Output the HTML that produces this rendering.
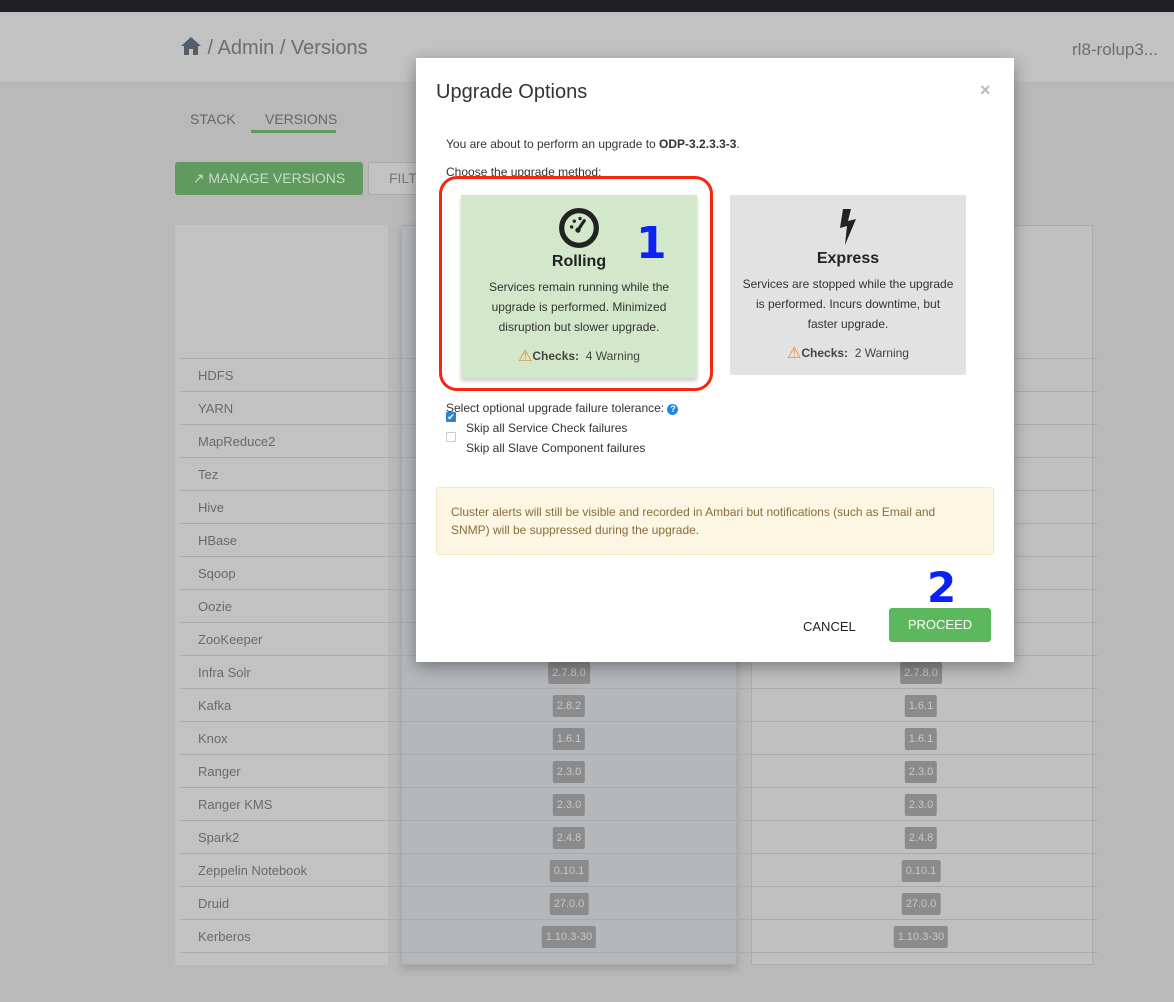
<!DOCTYPE html>
<html><head><meta charset="utf-8"><style>
*{box-sizing:border-box;margin:0;padding:0}
body{width:1174px;height:1002px;overflow:hidden;background:#b9b9b9;font-family:"Liberation Sans",sans-serif;position:relative;color:#555}
.abs{position:absolute}
.top{left:0;top:0;width:1174px;height:12px;background:#1f1f25}
.hdr{left:0;top:12px;width:1174px;height:71px;background:#c2c2c2;border-bottom:1px solid #b3b3b3}
.bc{left:180px;top:36px;font-size:20px;color:#6e6e6e}
.host{left:1072px;top:40px;font-size:17px;color:#6e6e6e}
.tab{top:111px;font-size:14px;color:#666}
.btn{left:175px;top:162px;width:188px;height:33px;background:#609a5e;border-radius:3px;color:#c8dcc6;font-size:14px;line-height:33px;text-align:center}
.filt{left:368px;top:162px;width:60px;height:33px;border:1px solid #aaa;border-radius:3px;background:#c2c2c2;font-size:14px;line-height:31px;padding-left:20px;color:#777}
.c1{left:175px;top:225px;width:213px;height:740px;background:#c2c2c2}
.c2{left:401px;top:225px;width:336px;height:740px;background:#b4b8bb;border:1px solid #a8acb0;box-shadow:0 4px 8px rgba(0,0,0,.15)}
.c3{left:751px;top:225px;width:342px;height:740px;background:#c0c0c0;border:1px solid #acacac}
.row{left:180px;width:918px;height:33px;border-top:1px solid #a9abad}
.row span{position:absolute;left:18px;top:9px;font-size:13px;color:#6a6a6a}
.badge{position:absolute;top:6px;height:22px;background:#8b8b8b;border-radius:2px;color:#c8c8c8;font-size:11px;font-weight:normal;line-height:22px;padding:0 4px;transform:translateX(-50%)}
.modal{left:416px;top:58px;width:598px;height:604px;background:#fff;box-shadow:0 5px 15px rgba(0,0,0,.35)}
.m{position:absolute}
.card{position:absolute;text-align:center;font-size:12px;color:#333;line-height:20px}
.warn{color:#e9883c;font-size:16px;vertical-align:-1px}
</style></head><body>
<div class="abs top"></div>
<div class="abs hdr"></div>
<div class="abs bc"><svg width="22" height="20" viewBox="0 0 22 20" style="vertical-align:-2px"><path d="M11 1 L1 10 H4 V19 H9 V13 H13 V19 H18 V10 H21 Z" fill="#555d66"/></svg> / Admin / Versions</div>
<div class="abs host">rl8-rolup3...</div>
<div class="abs tab" style="left:190px">STACK</div>
<div class="abs tab" style="left:265px">VERSIONS</div>
<div class="abs" style="left:251px;top:130px;width:85px;height:3px;background:#5f9a5c"></div>
<div class="abs btn">&#x2197; MANAGE VERSIONS</div>
<div class="abs filt">FILT</div>
<div class="abs c1"></div><div class="abs c2"></div><div class="abs c3"></div>

<div class="abs row" style="top:358px"><span>HDFS</span></div>
<div class="abs row" style="top:391px"><span>YARN</span></div>
<div class="abs row" style="top:424px"><span>MapReduce2</span></div>
<div class="abs row" style="top:457px"><span>Tez</span></div>
<div class="abs row" style="top:490px"><span>Hive</span></div>
<div class="abs row" style="top:523px"><span>HBase</span></div>
<div class="abs row" style="top:556px"><span>Sqoop</span></div>
<div class="abs row" style="top:589px"><span>Oozie</span></div>
<div class="abs row" style="top:622px"><span>ZooKeeper</span></div>
<div class="abs row" style="top:655px"><span>Infra Solr</span><b class="badge" style="left:389px">2.7.8.0</b><b class="badge" style="left:741px">2.7.8.0</b></div>
<div class="abs row" style="top:688px"><span>Kafka</span><b class="badge" style="left:389px">2.8.2</b><b class="badge" style="left:741px">1.6.1</b></div>
<div class="abs row" style="top:721px"><span>Knox</span><b class="badge" style="left:389px">1.6.1</b><b class="badge" style="left:741px">1.6.1</b></div>
<div class="abs row" style="top:754px"><span>Ranger</span><b class="badge" style="left:389px">2.3.0</b><b class="badge" style="left:741px">2.3.0</b></div>
<div class="abs row" style="top:787px"><span>Ranger KMS</span><b class="badge" style="left:389px">2.3.0</b><b class="badge" style="left:741px">2.3.0</b></div>
<div class="abs row" style="top:820px"><span>Spark2</span><b class="badge" style="left:389px">2.4.8</b><b class="badge" style="left:741px">2.4.8</b></div>
<div class="abs row" style="top:853px"><span>Zeppelin Notebook</span><b class="badge" style="left:389px">0.10.1</b><b class="badge" style="left:741px">0.10.1</b></div>
<div class="abs row" style="top:886px"><span>Druid</span><b class="badge" style="left:389px">27.0.0</b><b class="badge" style="left:741px">27.0.0</b></div>
<div class="abs row" style="top:919px"><span>Kerberos</span><b class="badge" style="left:389px">1.10.3-30</b><b class="badge" style="left:741px">1.10.3-30</b></div>
<div class="abs row" style="top:952px;height:1px"></div>

<div class="abs modal">
 <div class="m" style="left:20px;top:23px;font-size:20px;color:#333">Upgrade Options</div>
 <div class="m" style="left:564px;top:22px;font-size:18px;color:#bbb;font-weight:bold">×</div>
 <div class="m" style="left:30px;top:79px;font-size:12px;color:#333">You are about to perform an upgrade to <b>ODP-3.2.3.3-3</b>.</div>
 <div class="m" style="left:30px;top:107px;font-size:12px;color:#333">Choose the upgrade method:</div>
 <div class="m" style="left:23px;top:118px;width:274px;height:215px;border:3px solid #f5250e;border-radius:18px"></div>
 <div class="card" style="left:45px;top:137px;width:236px;height:183px;background:#d3e7cb;box-shadow:0 3px 4px rgba(0,0,0,.2)">
  <svg width="42" height="42" viewBox="0 0 40 40" style="position:absolute;left:97px;top:12px"><circle cx="20" cy="20" r="16.5" fill="none" stroke="#222" stroke-width="5"/><circle cx="13" cy="19" r="1.6" fill="#222"/><circle cx="15.5" cy="13.5" r="1.6" fill="#222"/><circle cx="21" cy="11" r="1.6" fill="#222"/><path d="M19 22 L25 13" stroke="#222" stroke-width="3" stroke-linecap="round"/><circle cx="19" cy="22" r="2.5" fill="#222"/></svg>
  <div style="position:absolute;left:0;width:236px;top:57px;font-size:16px;font-weight:bold;color:#222">Rolling</div>
  <div style="position:absolute;left:0;width:236px;top:82px">Services remain running while the<br>upgrade is performed. Minimized<br>disruption but slower upgrade.</div>
  <div style="position:absolute;left:0;width:236px;top:151px;color:#444"><span class="warn">&#9888;</span><b>Checks:</b>&nbsp; 4 Warning</div>
 </div>
 <div class="m" style="left:220px;top:160px;font-size:44px;font-weight:900;color:#0b22f5;font-family:'DejaVu Sans',sans-serif">1</div>
 <div class="card" style="left:314px;top:137px;width:236px;height:180px;background:#e2e2e2">
  <svg width="24" height="40" viewBox="0 0 24 40" style="position:absolute;left:106px;top:12px"><path d="M7 2 H15 L12 14 L20 12 L9 38 L11 19 L4 21 Z" fill="#222"/></svg>
  <div style="position:absolute;left:0;width:236px;top:54px;font-size:16px;font-weight:bold;color:#222">Express</div>
  <div style="position:absolute;left:0;width:236px;top:79px">Services are stopped while the upgrade<br>is performed. Incurs downtime, but<br>faster upgrade.</div>
  <div style="position:absolute;left:0;width:236px;top:148px;color:#444"><span class="warn">&#9888;</span><b>Checks:</b>&nbsp; 2 Warning</div>
 </div>
 <div class="m" style="left:30px;top:343px;font-size:12px;color:#333">Select optional upgrade failure tolerance: <span style="display:inline-block;width:11px;height:11px;border-radius:50%;background:#1e88e5;color:#fff;font-size:9px;line-height:11px;text-align:center;font-weight:bold">?</span></div>
 <div class="m" style="left:30px;top:354px;width:10px;height:10px;background:#2a86c9;border-radius:1px;color:#fff;font-size:9px;line-height:10px;text-align:center">✔</div>
 <div class="m" style="left:30px;top:374px;width:10px;height:10px;border:1px solid #ccc;border-radius:1px"></div>
 <div class="m" style="left:50px;top:363px;font-size:12px;color:#333">Skip all Service Check failures</div>
 <div class="m" style="left:50px;top:383px;font-size:12px;color:#333">Skip all Slave Component failures</div>
 <div class="m" style="left:20px;top:429px;width:558px;height:68px;background:#fcf6e3;border:1px solid #f6e8c4;border-radius:3px;padding:15px 50px 15px 14px;font-size:12px;line-height:18px;color:#8a6d3b">Cluster alerts will still be visible and recorded in Ambari but notifications (such as Email and SNMP) will be suppressed during the upgrade.</div>
 <div class="m" style="left:511px;top:508px;font-size:42px;font-weight:900;color:#0b22f5;font-family:'DejaVu Sans',sans-serif;line-height:44px">2</div>
 <div class="m" style="left:387px;top:561px;font-size:13px;color:#222">CANCEL</div>
 <div class="m" style="left:473px;top:550px;width:102px;height:34px;background:#5cb85c;border-radius:3px;color:#fff;font-size:13px;line-height:34px;text-align:center">PROCEED</div>
</div>
</body></html>
